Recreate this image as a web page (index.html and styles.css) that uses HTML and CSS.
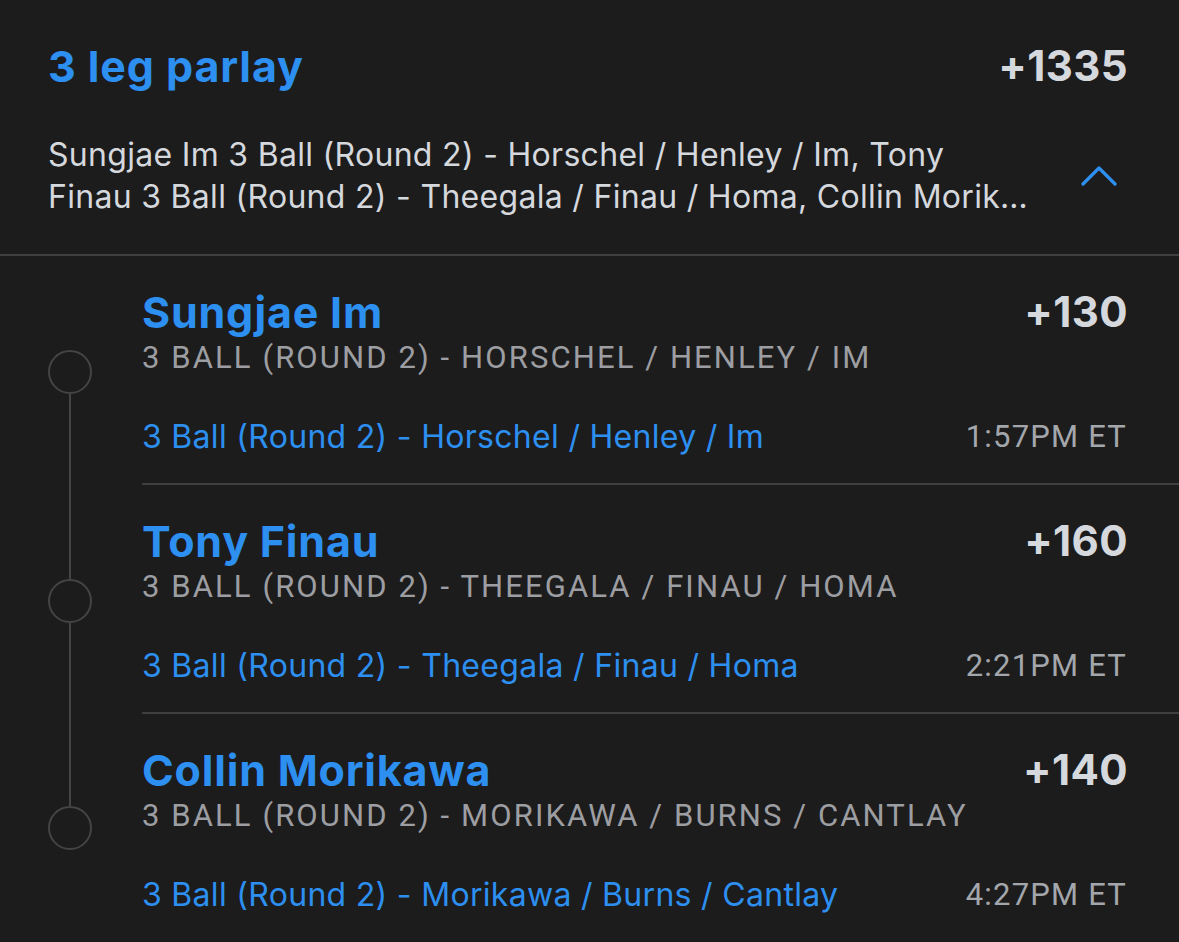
FILE: index.html
```html
<!DOCTYPE html>
<html lang="en">
<head>
<meta charset="utf-8">
<title>3 leg parlay</title>
<link rel="stylesheet" href="styles.css">
</head>
<body>
<main class="card">
  <header class="head">
    <div class="title-row">
      <h1 class="title">3 leg parlay</h1>
      <span class="odds odds-big">+1335</span>
    </div>
    <div class="summary-row">
      <p class="summary">
        <span class="summary-line">Sungjae Im 3 Ball (Round 2) - Horschel / Henley / Im, Tony</span>
        <span class="summary-line summary-clip">Finau 3 Ball (Round 2) - Theegala / Finau / Homa, Collin Morikawa 3 Ball (Round 2) - Morikawa / Burns / Cantlay</span>
      </p>
      <svg class="chevron" width="36" height="22" viewBox="0 0 36 22" aria-hidden="true">
        <path d="M2 19 L18 3 L34 19" fill="none" stroke="#2d8ff0" stroke-width="3.2" stroke-linecap="round" stroke-linejoin="round"/>
      </svg>
    </div>
  </header>

  <section class="legs">
    <article class="leg leg-first">
      <div class="rail"><span class="dot"></span></div>
      <div class="leg-body">
        <div class="leg-top">
          <h2 class="name">Sungjae Im</h2>
          <span class="odds">+130</span>
        </div>
        <div class="market">3 BALL (ROUND 2) - HORSCHEL / HENLEY / IM</div>
        <div class="leg-bottom">
          <span class="event">3 Ball (Round 2) - Horschel / Henley / Im</span>
          <span class="time">1:57PM ET</span>
        </div>
      </div>
    </article>

    <article class="leg leg-mid">
      <div class="rail"><span class="dot"></span></div>
      <div class="leg-body">
        <div class="leg-top">
          <h2 class="name">Tony Finau</h2>
          <span class="odds">+160</span>
        </div>
        <div class="market">3 BALL (ROUND 2) - THEEGALA / FINAU / HOMA</div>
        <div class="leg-bottom">
          <span class="event">3 Ball (Round 2) - Theegala / Finau / Homa</span>
          <span class="time">2:21PM ET</span>
        </div>
      </div>
    </article>

    <article class="leg leg-last">
      <div class="rail"><span class="dot"></span></div>
      <div class="leg-body">
        <div class="leg-top">
          <h2 class="name">Collin Morikawa</h2>
          <span class="odds">+140</span>
        </div>
        <div class="market">3 BALL (ROUND 2) - MORIKAWA / BURNS / CANTLAY</div>
        <div class="leg-bottom">
          <span class="event">3 Ball (Round 2) - Morikawa / Burns / Cantlay</span>
          <span class="time">4:27PM ET</span>
        </div>
      </div>
    </article>
  </section>
</main>
</body>
</html>
```

FILE: styles.css
```css
html, body {
  margin: 0;
  padding: 0;
  background: #1c1c1d;
}

body {
  width: 1179px;
  height: 942px;
  overflow: hidden;
  font-family: "Inter", "Noto Sans", sans-serif;
  color: #d5d8dd;
}

.card {
  display: flex;
  flex-direction: column;
}

.head {
  padding: 38px 51px 0 48px;
  border-bottom: 2px solid #3f3f41;
}

.title-row {
  display: flex;
  justify-content: space-between;
  align-items: center;
  height: 56px;
}

.title {
  margin: 0;
  font-size: 43px;
  font-weight: 700;
  color: #2d8ff0;
  line-height: 56px;
  letter-spacing: 0.9px;
}

.odds {
  font-weight: 700;
  font-size: 42px;
  color: #d5d8dd;
  line-height: 1;
  letter-spacing: 0.4px;
}

.summary-row {
  display: flex;
  align-items: center;
  justify-content: space-between;
  padding: 40px 0 36px;
}

.summary {
  margin: 0;
  width: 986px;
  font-size: 32px;
  line-height: 42px;
  color: #d5d8dd;
  letter-spacing: 0.3px;
  display: flex;
  flex-direction: column;
}

.summary-line {
  display: block;
  white-space: nowrap;
}

.summary-clip {
  overflow: hidden;
  text-overflow: ellipsis;
}

.chevron {
  margin-right: 11px;
  flex: none;
}

.legs {
  display: flex;
  flex-direction: column;
}

.leg {
  display: grid;
  grid-template-columns: 142px 1fr;
}

.rail {
  position: relative;
}

.dot {
  position: absolute;
  left: 48px;
  top: 94px;
  width: 40px;
  height: 40px;
  border: 2px solid #444446;
  border-radius: 50%;
}

.rail::before {
  content: "";
  position: absolute;
  left: 69px;
  width: 2px;
  background: #444446;
}

.leg-first .rail::before {
  top: 138px;
  bottom: 0;
}

.leg-mid .rail::before {
  top: 138px;
  bottom: 0;
}

.leg-mid .rail::after {
  content: "";
  position: absolute;
  left: 69px;
  width: 2px;
  top: 0;
  height: 94px;
  background: #444446;
}

.leg-last .rail::before {
  top: 0;
  height: 92px;
}

.leg-last .dot {
  top: 92px;
}

.leg-body {
  padding: 32px 51px 27px 0;
}

.leg-first .leg-body,
.leg-mid .leg-body {
  border-bottom: 2px solid #3f3f41;
}

.leg-top {
  display: flex;
  justify-content: space-between;
  align-items: center;
  height: 48px;
}

.name {
  margin: 0;
  font-size: 43px;
  font-weight: 700;
  color: #2d8ff0;
  line-height: 48px;
  letter-spacing: 0.8px;
}

.market {
  font-family: "Roboto", sans-serif;
  font-size: 31px;
  letter-spacing: 2.1px;
  color: #9c9ea2;
  line-height: 36px;
  margin-top: 4px;
}

.leg-bottom {
  display: flex;
  justify-content: space-between;
  align-items: center;
  margin-top: 40px;
  height: 40px;
}

.event {
  font-size: 32px;
  color: #2d8ff0;
  letter-spacing: 0.3px;
}

.time {
  font-family: "Roboto", sans-serif;
  font-size: 31px;
  letter-spacing: 1.2px;
  color: #a3a6ab;
  margin-right: 1px;
}
```
